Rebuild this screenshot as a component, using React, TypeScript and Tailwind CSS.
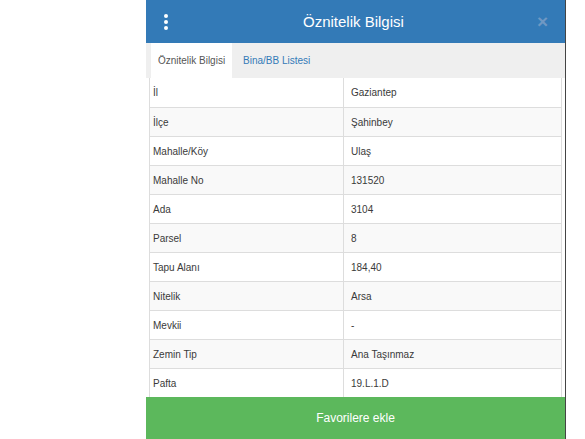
const rows: [string, string][] = [
  ["İl", "Gaziantep"],
  ["İlçe", "Şahinbey"],
  ["Mahalle/Köy", "Ulaş"],
  ["Mahalle No", "131520"],
  ["Ada", "3104"],
  ["Parsel", "8"],
  ["Tapu Alanı", "184,40"],
  ["Nitelik", "Arsa"],
  ["Mevkii", "-"],
  ["Zemin Tip", "Ana Taşınmaz"],
  ["Pafta", "19.L.1.D"],
]

export default function App() {
  return (
    <div className="w-[585px] h-[439px] bg-white overflow-hidden font-['Liberation_Sans',Arial,sans-serif]">
      <div className="ml-[146px] w-[420px] h-[439px] flex flex-col border-r border-[#444]">
        {/* Header */}
        <div className="h-[43px] shrink-0 bg-[#337ab7] flex items-center px-[15px]">
          <svg width="8" height="18" viewBox="0 0 8 18" className="ml-[1px]">
            <circle cx="4" cy="3" r="2" fill="#fff" />
            <circle cx="4" cy="9" r="2" fill="#fff" />
            <circle cx="4" cy="15" r="2" fill="#fff" />
          </svg>
          <div className="flex-1 text-center text-white text-[15px] leading-none">
            Öznitelik Bilgisi
          </div>
          <span className="text-[#6f98c3] text-[19px] font-bold leading-none mr-[2px]">×</span>
        </div>

        {/* Tabs */}
        <div className="h-[35px] shrink-0 bg-[#efefef] flex items-end pl-[5px]">
          <div className="h-[35px] w-[81px] bg-white flex items-center justify-center text-[10px] text-[#555]">
            Öznitelik Bilgisi
          </div>
          <div className="h-[35px] flex items-center pl-[11px] text-[10px] text-[#337ab7]">
            Bina/BB Listesi
          </div>
        </div>

        {/* Table */}
        <div className="flex-1 bg-white px-[3px]">
          <div className="border-x border-[#ddd]">
            {rows.map(([label, value], i) => (
              <div
                key={label}
                className={`h-[29px] flex text-[10px] text-[#3a3a3a] ${i > 0 ? "border-t border-[#ddd]" : ""} ${i % 2 === 1 ? "bg-[#f9f9f9]" : "bg-white"}`}
              >
                <div className="w-[194px] flex items-center pl-[3px] border-r border-[#ddd]">{label}</div>
                <div className="flex-1 flex items-center pl-[7px]">{value}</div>
              </div>
            ))}
          </div>
        </div>

        {/* Footer button */}
        <button className="h-[42px] shrink-0 bg-[#5cb85c] text-white text-[12px] flex items-center justify-center">
          Favorilere ekle
        </button>
      </div>
    </div>
  )
}
